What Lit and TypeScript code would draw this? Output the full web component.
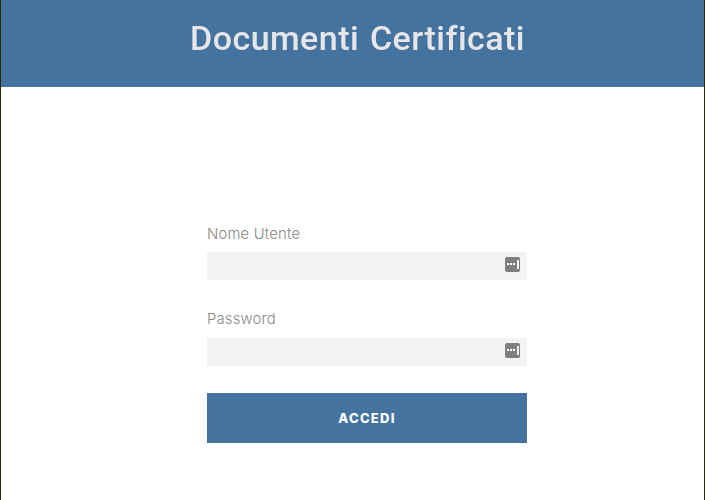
import { LitElement, html, css } from "lit";
import { customElement } from "lit/decorators.js";

const keyIcon = html`<svg class="key" width="15" height="15" viewBox="0 0 15 15" aria-hidden="true">
  <rect x="0" y="0" width="15" height="15" rx="2" fill="#7f7f7f"></rect>
  <rect x="12" y="3" width="2" height="9" fill="#f2f2f2"></rect>
  <rect x="2" y="6" width="2" height="2" fill="#fff"></rect>
  <rect x="5" y="6" width="2" height="2" fill="#fff"></rect>
  <rect x="8" y="6" width="2" height="2" fill="#fff"></rect>
</svg>`;

@customElement("app-root")
export class AppRoot extends LitElement {
  static styles = css`
    :host {
      display: block;
      box-sizing: border-box;
      width: 705px;
      height: 500px;
      background: #fff;
      border-left: 1px solid #2b2b00;
      border-right: 1px solid #2b2b00;
      overflow: hidden;
    }
    .header {
      height: 87px;
      background: #44739f;
      display: flex;
      justify-content: center;
      padding: 17px 0 0 10px;
      box-sizing: border-box;
    }
    .title {
      font-family: "Roboto", sans-serif;
      font-size: 34px;
      line-height: 42px;
      letter-spacing: 0.45px;
      word-spacing: 2px;
      color: #e6e6e8;
      filter: blur(0.4px);
      margin: 0;
      font-weight: 500;
    }
    .form {
      width: 320px;
      margin: 136.5px 0 0 206px;
      display: flex;
      flex-direction: column;
    }
    .label {
      font-family: "Inter", sans-serif;
      font-size: 14.8px;
      font-weight: 300;
      letter-spacing: 0.2px;
      line-height: 20px;
      color: #8a8682;
      margin-bottom: 8.5px;
      display: block;
    }
    .label.second { margin-bottom: 9px; }
    .field {
      height: 28px;
      background: #f3f3f3;
      display: flex;
      align-items: flex-start;
      justify-content: flex-end;
      padding: 5px 7px 0 0;
      box-sizing: border-box;
      margin-bottom: 29px;
    }
    .field.last { margin-bottom: 27px; }
    .key { display: block; }
    .btn {
      height: 50px;
      background: #44739f;
      color: #fff;
      border: 0;
      font-family: "Inter", sans-serif;
      font-size: 13px;
      font-weight: 800;
      letter-spacing: 1.3px;
      padding: 0;
    }
  `;

  render() {
    return html`
      <div class="header"><h1 class="title">Documenti Certificati</h1></div>
      <div class="form">
        <span class="label">Nome Utente</span>
        <div class="field">${keyIcon}</div>
        <span class="label second">Password</span>
        <div class="field last">${keyIcon}</div>
        <button class="btn">ACCEDI</button>
      </div>
    `;
  }
}
